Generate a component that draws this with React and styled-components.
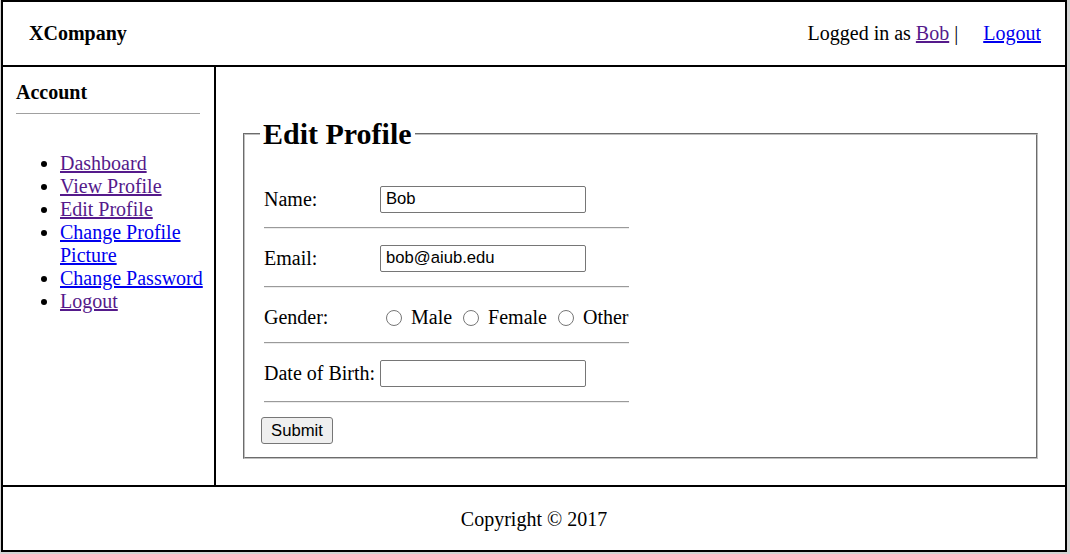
import React from 'react';
import styled, { createGlobalStyle } from 'styled-components';

const GlobalStyle = createGlobalStyle`
  html, body {
    margin: 0;
    padding: 0;
    background: #d4d4d4;
  }
  body {
    font-family: "Liberation Serif", "Times New Roman", serif;
    font-size: 20px;
    color: #000;
  }
`;

const Page = styled.div`
  margin-left: 1px;
  width: 1066px;
  height: 552px;
  box-sizing: border-box;
  border: 2px solid #000;
  background: #fff;
  display: grid;
  grid-template-columns: 213px 1fr;
  grid-template-rows: 65px 420px 63px;
`;

const Header = styled.header`
  grid-column: 1 / -1;
  box-sizing: border-box;
  border-bottom: 2px solid #000;
  display: flex;
  align-items: center;
  justify-content: space-between;
  padding: 0 24px 0 26px;
  line-height: 23px;
`;

const Brand = styled.div`
  font-weight: bold;
`;

const UserBox = styled.div`
  white-space: nowrap;
`;

const Link = styled.a`
  color: ${props => (props.$visited ? '#551a8b' : '#0000ee')};
  text-decoration: underline;
  cursor: pointer;
`;

const LogoutLink = styled(Link)`
  margin-left: 25px;
`;

const Sidebar = styled.aside`
  box-sizing: border-box;
  border-right: 2px solid #000;
  border-bottom: 2px solid #000;
  padding: 14px 8px 0 13px;
  line-height: 23px;
`;

const SideTitle = styled.div`
  font-weight: bold;
`;

const SideRule = styled.hr`
  width: 184px;
  margin: 9px 0 0;
  height: 0;
  border: 0;
  border-top: 1px solid #a0a0a0;
`;

const NavList = styled.ul`
  margin: 38px 0 0;
  padding-left: 44px;
  list-style: disc;
`;

const Main = styled.main`
  box-sizing: border-box;
  border-bottom: 2px solid #000;
  padding: 50px 27px 0 27px;
`;

const Fieldset = styled.fieldset`
  margin: 0;
  min-width: 0;
  border: 2px groove #c0c0c0;
  padding: 0 15px 13px;
`;

const Legend = styled.legend`
  padding: 0 3px;
  font-size: 30px;
  font-weight: bold;
  line-height: 34px;
`;

const FormArea = styled.div`
  margin: 33px 0 0 4px;
  width: 365px;
`;

const Row = styled.div`
  box-sizing: border-box;
  display: grid;
  grid-template-columns: 116px 1fr;
  align-items: center;
  height: ${props => props.$h}px;
  padding-top: ${props => props.$shift || 0}px;
  line-height: 23px;
`;

const Divider = styled.hr`
  margin: 13px 0 14px;
  height: 0;
  border: 0;
  border-top: 1px solid #9a9a9a;
  border-bottom: 1px solid #ececec;
`;

const TextInput = styled.input`
  box-sizing: border-box;
  width: 206px;
  height: 27px;
  margin: 0;
  padding: 0 5px;
  border: 1px solid #767676;
  border-radius: 2px;
  font-family: "Liberation Sans", Arial, sans-serif;
  font-size: 16.67px;
  color: #000;
  background: #fff;
`;

const Options = styled.div`
  white-space: nowrap;
`;

const Radio = styled.input`
  appearance: none;
  box-sizing: border-box;
  width: 16px;
  height: 16px;
  margin: 0 4px 0 6px;
  border: 1px solid #767676;
  border-radius: 50%;
  background: #fff;
  vertical-align: -2px;
`;

const SubmitButton = styled.button`
  display: block;
  box-sizing: border-box;
  width: 72px;
  height: 27px;
  margin: 1px 0 0 1px;
  padding: 0;
  border: 1px solid #767676;
  border-radius: 3px;
  background: #efefef;
  font-family: "Liberation Sans", Arial, sans-serif;
  font-size: 16.67px;
  color: #000;
`;

const Footer = styled.footer`
  grid-column: 1 / -1;
  display: flex;
  align-items: center;
  justify-content: center;
  padding-top: 2px;
  line-height: 23px;
`;

const navItems = [
  { label: 'Dashboard', visited: true },
  { label: 'View Profile', visited: true },
  { label: 'Edit Profile', visited: true },
  { label: 'Change Profile Picture', visited: false },
  { label: 'Change Password', visited: false },
  { label: 'Logout', visited: true },
];

const genders = ['Male', 'Female', 'Other'];

export default function App() {
  return (
    <>
      <GlobalStyle />
      <Page>
        <Header>
          <Brand>XCompany</Brand>
          <UserBox>
            Logged in as <Link $visited>Bob</Link> |
            <LogoutLink>Logout</LogoutLink>
          </UserBox>
        </Header>

        <Sidebar>
          <SideTitle>Account</SideTitle>
          <SideRule />
          <NavList>
            {navItems.map(item => (
              <li key={item.label}>
                <Link $visited={item.visited}>{item.label}</Link>
              </li>
            ))}
          </NavList>
        </Sidebar>

        <Main>
          <Fieldset>
            <Legend>Edit Profile</Legend>
            <FormArea>
              <Row $h={30}>
                <span>Name:</span>
                <TextInput type="text" defaultValue="Bob" />
              </Row>
              <Divider />
              <Row $h={30}>
                <span>Email:</span>
                <TextInput type="text" defaultValue="bob@aiub.edu" />
              </Row>
              <Divider />
              <Row $h={27} $shift={3}>
                <span>Gender:</span>
                <Options>
                  {genders.map((g, i) => (
                    <React.Fragment key={g}>
                      {i > 0 && ' '}
                      <label><Radio type="radio" name="gender" /> {g}</label>
                    </React.Fragment>
                  ))}
                </Options>
              </Row>
              <Divider />
              <Row $h={30}>
                <span>Date of Birth:</span>
                <TextInput type="text" />
              </Row>
              <Divider />
            </FormArea>
            <SubmitButton type="button">Submit</SubmitButton>
          </Fieldset>
        </Main>

        <Footer>Copyright © 2017</Footer>
      </Page>
    </>
  );
}
